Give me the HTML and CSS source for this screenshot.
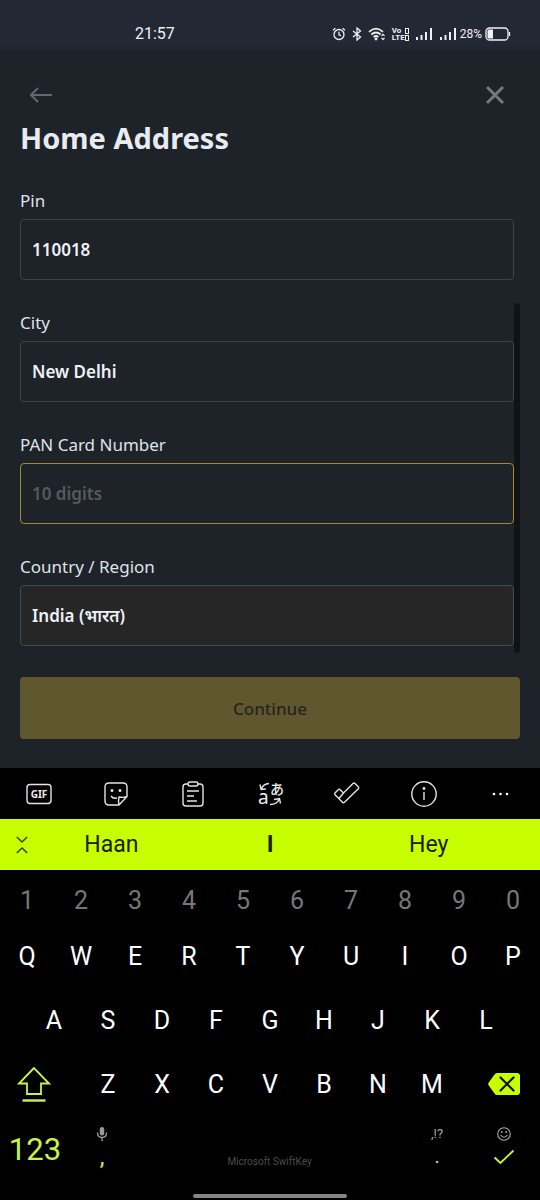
FILE: index.html
```html
<!DOCTYPE html>
<html lang="en">
<head>
<meta charset="utf-8">
<meta name="viewport" content="width=device-width, initial-scale=1">
<title>Home Address</title>
<link rel="stylesheet" href="styles.css">
</head>
<body>
<header class="status">
  <time class="clock">21:57</time>
  <div class="indicators">
    <svg width="14" height="14" viewBox="0 0 14 14" class="line"><circle cx="7" cy="7.5" r="5"/><path d="M7 4.8v3l2 .8M1 3.2l2.4-2M13 3.2l-2.4-2"/></svg>
    <svg width="10" height="14" viewBox="0 0 10 14" class="line"><path d="M1 4l7.5 6L5 13V1l3.500 3L1 10"/></svg>
    <svg width="18" height="14" viewBox="0 0 18 14" class="line"><path stroke-width="1.7" d="M1 4.800q7-6.500 14 0M3.300 7.500q4.700-4 9.400 0M5.600 10q2.400-2 4.800 0"/><circle cx="8" cy="12" r=".8"/><path stroke-width="1.200" d="M13.500 8.800l1.500-1.500 1.500 1.500M13.500 11l1.500 1.500 1.500-1.500"/></svg>
    <span class="volte"><span>Vo<i></i></span><span>LTE<i></i></span></span>
    <svg width="18" height="14" viewBox="0 0 18 14" class="bars"><path d="M1 10h2v3H1zM5.500 8h2v5h-2zM10 5h2v8h-2zM15 1h2v12h-2z"/></svg>
    <svg width="18" height="14" viewBox="0 0 18 14" class="bars"><path d="M1 10h2v3H1zM5.500 8h2v5h-2zM10 5h2v8h-2zM15 1h2v12h-2z"/></svg>
    <span class="percent">28%</span>
    <svg width="26" height="14" viewBox="0 0 26 14" class="line"><rect x="1" y="1" width="22" height="12" rx="3.500"/><path fill="#eef0f4" stroke="none" d="M3.500 2.500H8v9H3.500Q2.500 11.500 2.500 10V4q0-1.500 1-1.500z"/><path d="M24.500 5v4"/></svg>
  </div>
</header>

<main class="page">
  <nav class="nav">
    <button class="icon-button" aria-label="Back"><svg width="24" height="18" viewBox="0 0 24 18"><path d="M9 2L2 9l7 7M2 9h21"/></svg></button>
    <button class="icon-button close" aria-label="Close"><svg width="20" height="20" viewBox="0 0 20 20"><path d="M2 2l16 16M18 2L2 18"/></svg></button>
  </nav>
  <h1 class="title">Home Address</h1>
  <form class="form">
    <div class="fields">
      <div class="field"><label for="pin">Pin</label><input id="pin" type="text" value="110018"></div>
      <div class="field"><label for="city">City</label><input id="city" type="text" value="New Delhi"></div>
      <div class="field"><label for="pan">PAN Card Number</label><input id="pan" class="active" type="text" placeholder="10 digits"></div>
      <div class="field"><label for="country">Country / Region</label><select id="country"><option>India (भारत)</option></select></div>
      <span class="scrollbar"></span>
    </div>
    <button class="continue" type="button">Continue</button>
  </form>
</main>

<section class="keyboard" aria-label="Keyboard">
  <div class="tools">
    <button aria-label="GIF"><svg width="28" height="28" viewBox="0 0 28 28"><rect x="2" y="4.500" width="24" height="19" rx="3"/><text x="14" y="17.500" class="gif">GIF</text></svg></button>
    <button aria-label="Stickers"><svg width="28" height="28" viewBox="0 0 28 28"><path d="M17 25H7q-4 0-4-4V7q0-4 4-4h14q4 0 4 4v9.500zM17 25q-1-4 0-8 4 1 8-.5M9 16q2 3 6 2"/><circle cx="10" cy="10.500" r=".8" fill="#fff"/><circle cx="18" cy="10.500" r=".8" fill="#fff"/></svg></button>
    <button aria-label="Clipboard"><svg width="28" height="28" viewBox="0 0 28 28"><path d="M9 4H7Q4 4 4 7v16q0 3 3 3h14q3 0 3-3V7q0-3-3-3h-2"/><rect x="9" y="2" width="10" height="4" rx="2"/><path d="M8 11h12M8 16h7M8 21h10"/></svg></button>
    <button aria-label="Translate"><svg width="28" height="28" viewBox="0 0 28 28"><text x="2" y="24" class="latin">a</text><text x="14" y="14" class="kana">あ</text><path d="M13 3.500Q7 4 5.500 9M4 4.500L5 9.500 10 9M14 24.500q7 0 9-5M18 19.500l5.500-1 1 5"/></svg></button>
    <button aria-label="Tasks"><svg width="28" height="28" viewBox="0 0 28 28"><path d="M2 13l3.200-3.200q1-1 2 0L10.500 13 20 3.500q1-1 2 0L25.300 6.800q1 1 0 2L11.500 22.200q-1 1-2 0L2 14.700q-.8-.8 0-1.700zM6 18.500l4.500-5.500"/></svg></button>
    <button aria-label="Information"><svg width="28" height="28" viewBox="0 0 28 28"><circle cx="14" cy="14" r="12.200"/><path d="M14 12v8"/><circle cx="14" cy="8.500" r=".7" fill="#fff"/></svg></button>
    <button aria-label="More"><svg width="28" height="28" viewBox="0 0 28 28" class="dots"><circle cx="7" cy="14" r="1.300"/><circle cx="13.500" cy="14" r="1.300"/><circle cx="20" cy="14" r="1.300"/></svg></button>
  </div>
  <div class="suggestions">
    <button class="collapse" aria-label="Collapse"><svg width="12" height="18" viewBox="0 0 12 18"><path d="M.8 1L6 6l5.200-5M.8 17L6 12l5.200 5"/></svg></button>
    <button>Haan</button><button class="best">I</button><button>Hey</button>
  </div>
  <div class="row numbers"><button>1</button><button>2</button><button>3</button><button>4</button><button>5</button><button>6</button><button>7</button><button>8</button><button>9</button><button>0</button></div>
  <div class="row"><button>Q</button><button>W</button><button>E</button><button>R</button><button>T</button><button>Y</button><button>U</button><button>I</button><button>O</button><button>P</button></div>
  <div class="row middle"><button>A</button><button>S</button><button>D</button><button>F</button><button>G</button><button>H</button><button>J</button><button>K</button><button>L</button></div>
  <div class="row lower">
    <button class="shift" aria-label="Shift"><svg width="34" height="38" viewBox="0 0 34 38"><path d="M17 3L2 18.500h8V29h14V18.500h8z"/><path stroke-width="2.400" d="M5.500 35.500h23"/></svg></button>
    <button>Z</button><button>X</button><button>C</button><button>V</button><button>B</button><button>N</button><button>M</button>
    <button class="backspace" aria-label="Backspace"><svg width="32" height="24" viewBox="0 0 32 24"><path fill="#c8ff00" d="M9 1h20q3 0 3 3v16q0 3-3 3H9q-1.500 0-2.500-1.500L.6 13.200q-.7-1.200 0-2.400L6.500 2.500Q7.500 1 9 1z"/><path stroke="#101500" stroke-width="2.200" stroke-linecap="round" d="M12.500 5.500l13 13M25.500 5.500l-13 13"/></svg></button>
  </div>
  <div class="bottom">
    <button class="mode">123</button>
    <button class="stack" aria-label="Comma, voice input"><svg width="12" height="16" viewBox="0 0 12 16"><rect x="3.800" y="1" width="4.400" height="8.500" rx="2.200" fill="#999"/><path fill="none" stroke="#999" stroke-width="1.400" d="M1.500 6.500q0 5 4.500 5t4.500-5M6 11.500V15"/></svg><span class="comma">,</span></button>
    <button class="space">Microsoft SwiftKey</button>
    <button class="stack"><span class="hint">,!?</span><span class="period">.</span></button>
    <button class="stack enter" aria-label="Done, emoji"><svg width="16" height="16" viewBox="0 0 16 16"><g fill="none" stroke="#aaa" stroke-width="1.100"><circle cx="8" cy="8" r="6.300"/><path d="M4.500 9q3.500 4.500 7 0"/></g><circle cx="5.800" cy="6" r=".9" fill="#aaa"/><circle cx="10.200" cy="6" r=".9" fill="#aaa"/></svg><svg width="22" height="16" viewBox="0 0 22 16"><path fill="none" stroke="#c8f545" stroke-width="1.800" d="M1.500 8.500l6 5.500L20.500 1.500"/></svg></button>
  </div>
  <div class="home-bar"></div>
</section>
</body>
</html>
```

FILE: styles.css
```css
* { box-sizing: border-box; }
body {
  margin: 0;
  min-height: 100vh;
  display: flex;
  flex-direction: column;
  background: #1e2229;
  color: #e8ebf0;
  font-family: "Noto Sans", "Open Sans", sans-serif;
}
button { margin: 0; padding: 0; border: 0; background: none; color: inherit; font: inherit; }
svg { display: block; flex: none; }

.status {
  display: flex;
  justify-content: space-between;
  height: 54px;
  padding: 0 29px 0 25%;
  background: linear-gradient(#222935 44px, #1e2229);
  color: #eef0f4;
  font-family: Roboto, sans-serif;
}
.clock { font-size: 16px; line-height: 68px; }
.indicators { display: flex; align-items: center; gap: 6px; height: 68px; }
.line { fill: none; stroke: #eef0f4; stroke-width: 1.3; }
.bars { fill: #eef0f4; }
.volte { display: flex; flex-direction: column; font-size: 8px; font-weight: 700; line-height: 7px; }
.volte span { display: flex; justify-content: space-between; align-items: center; }
.volte i { width: 4px; height: 6px; border: 1px solid #eef0f4; }
.percent { margin: 0 -3px; font-size: 12px; }

.page { flex: 1; padding: 26px 20px 29px; }
.nav { display: flex; justify-content: space-between; align-items: center; height: 30px; padding: 0 15px 0 9px; }
.icon-button { display: flex; }
.icon-button svg { fill: none; stroke: #636873; stroke-width: 2; }
.icon-button.close svg { stroke: #737883; stroke-width: 3; }
.title { margin: 8px 0 22px; font-size: 29px; line-height: 40px; font-weight: 700; }
.form { display: flex; flex-direction: column; gap: 24px; }
.fields { position: relative; display: flex; flex-direction: column; gap: 29px; padding: 7px 6px 7px 0; }
.field { display: flex; flex-direction: column; gap: 4px; }
.field label { font-size: 17px; line-height: 28px; color: #dfe3e9; }
.field input, .field select {
  width: 100%;
  height: 61px;
  margin: 0;
  padding: 0 11px;
  appearance: none;
  border: 1px solid #3d424b;
  border-radius: 4px;
  outline: 0;
  background: #1e2229;
  color: #eef1f5;
  font: 600 17px "Noto Sans", sans-serif;
}
.field select { background: #262626; border-color: #434a52; opacity: 1; }
.field input::placeholder { color: #555960; opacity: 1; }
.field input.active { border-color: #a58a2c; }
.scrollbar { position: absolute; right: 0; top: 123px; bottom: 0; width: 6px; border-radius: 3px; background: #101216; }
.continue { height: 62px; border-radius: 4px; background: #61572f; color: #25251f; font-size: 17px; font-weight: 500; }

.keyboard { background: #000; color: #fff; font-family: Roboto, sans-serif; }
.tools { display: grid; grid-template-columns: repeat(7, 1fr); height: 51px; }
.tools button { display: flex; align-items: center; justify-content: center; }
.tools svg { fill: none; stroke: #e4e4e4; stroke-width: 1.4; overflow: visible; }
.tools text { fill: #eee; stroke: none; font-family: "Noto Sans", sans-serif; }
.tools .gif { font-size: 10px; font-weight: 700; text-anchor: middle; }
.tools .latin { font-size: 19px; }
.tools .kana { font-size: 14px; font-family: "Noto Sans CJK JP", sans-serif; font-weight: 500; }
.tools .dots { fill: #fff; stroke: none; }
.suggestions { display: grid; grid-template-columns: 32px repeat(3, 1fr); height: 51px; padding-right: 32px; background: #c8ff00; color: #172000; font-size: 23px; }
.best { font-weight: 700; }
.collapse { display: flex; align-items: center; justify-content: flex-end; padding-right: 4px; }
.collapse svg { fill: none; stroke: #344800; stroke-width: 1.6; }
.row { display: grid; grid-template-columns: repeat(10, 1fr); height: 64px; font-size: 25px; }
.numbers { height: 54px; padding-top: 6px; color: #777; }
.middle { grid-template-columns: repeat(9, 1fr); padding: 0 5%; }
.lower { grid-template-columns: 3fr repeat(7, 2fr) 3fr; }
.shift, .backspace { display: flex; align-items: center; }
.shift { padding-left: 17px; }
.shift svg { fill: none; stroke: #c8f545; stroke-width: 1.8; }
.backspace { justify-content: flex-end; padding-right: 20px; }
.backspace svg { fill: none; }
.bottom { display: grid; grid-template-columns: 75fr 54fr 281fr 54fr 76fr; height: 78px; padding-bottom: 12px; }
.mode { color: #c8f545; font-size: 31px; padding-right: 5px; }
.stack { display: flex; flex-direction: column; align-items: center; padding-top: 10px; gap: 7px; }
.comma, .period { color: #c8f545; font-size: 24px; line-height: 16px; }
.period { color: #eaff9c; font-size: 18px; }
.hint { color: #aaa; font-size: 13px; line-height: 16px; }
.enter { padding-left: 4px; }
.space { padding-top: 24px; color: #4d4d4d; font-size: 10px; }
.home-bar { width: 154px; height: 4px; margin: 0 auto 2px; border-radius: 2px; background: #858585; }
```
